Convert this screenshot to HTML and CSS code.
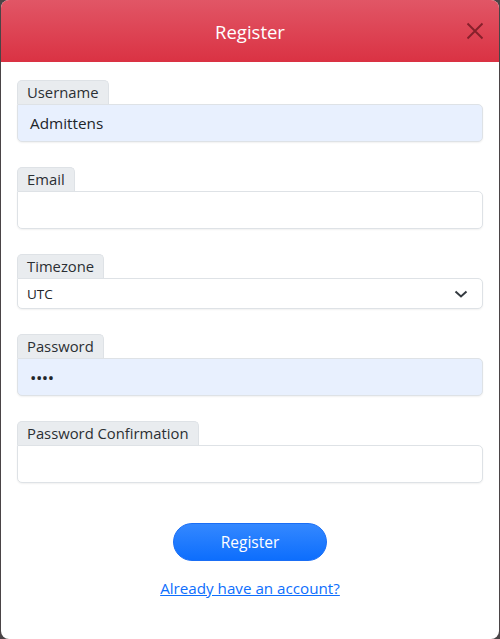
FILE: index.html
```html
<!DOCTYPE html>
<html lang="en">
<head>
<meta charset="utf-8">
<title>Register</title>
<link rel="stylesheet" href="styles.css">
</head>
<body>
<div class="modal">
  <header class="modal-header">
    <span></span>
    <h1 class="modal-title">Register</h1>
    <button class="close" aria-label="Close">
      <svg width="18" height="18" viewBox="0 0 18 18"><path d="M1.5 1.5 L16.5 16.5 M16.5 1.5 L1.5 16.5" stroke="#86202b" stroke-width="1.9" fill="none"/></svg>
    </button>
  </header>
  <form class="modal-body">
    <div class="field">
      <label class="tab">Username</label>
      <div class="input autofill">Admittens</div>
    </div>
    <div class="field">
      <label class="tab">Email</label>
      <div class="input"></div>
    </div>
    <div class="field">
      <label class="tab">Timezone</label>
      <div class="input select"><span>UTC</span>
        <svg width="14" height="10" viewBox="0 0 14 10"><path d="M1.5 2.5 L7 7.5 L12.5 2.5" stroke="#343a40" stroke-width="2" fill="none"/></svg>
      </div>
    </div>
    <div class="field">
      <label class="tab">Password</label>
      <div class="input autofill dots">&#8226;&#8226;&#8226;&#8226;</div>
    </div>
    <div class="field">
      <label class="tab">Password Confirmation</label>
      <div class="input"></div>
    </div>
    <div class="actions">
      <button type="button" class="btn">Register</button>
      <a href="#" class="link">Already have an account?</a>
    </div>
  </form>
</div>
</body>
</html>
```
FILE: styles.css
```css
* { box-sizing: border-box; }
html, body { margin: 0; height: 100%; }
body {
  background: #4a4446;
  font-family: "Open Sans", "Noto Sans", sans-serif;
  color: #212529;
}
.modal {
  margin: 0 1px;
  height: 639px;
  background: #fff;
  border-radius: 8px;
  overflow: hidden;
  display: flex;
  flex-direction: column;
}
.modal-header {
  height: 62px;
  flex: none;
  background: linear-gradient(to bottom, #e15666, #da3243);
  display: grid;
  grid-template-columns: 1fr auto 1fr;
  align-items: center;
}
.modal-title {
  margin: 0;
  font-size: 18.5px;
  font-weight: 400;
  color: #fff;
}
.close {
  justify-self: end;
  margin-right: 15px;
  background: none;
  border: 0;
  padding: 0;
  width: 18px;
  height: 18px;
  display: flex;
}
.modal-body {
  padding: 18px 16px 0;
  display: flex;
  flex-direction: column;
}
.field {
  display: flex;
  flex-direction: column;
  align-items: flex-start;
  margin-bottom: 25px;
}
.tab {
  height: 24px;
  padding: 0 9px;
  background: #e9ecef;
  border: 1px solid #dee2e6;
  border-bottom: 0;
  border-radius: 5px 5px 0 0;
  font-size: 14.8px;
  line-height: 23px;
  color: #2b2f33;
}
.input {
  align-self: stretch;
  height: 38px;
  border: 1px solid #dee2e6;
  border-radius: 0 5px 5px 5px;
  box-shadow: 0 1px 2px rgba(0,0,0,0.06);
  padding: 0 12px;
  font-size: 15.3px;
  display: flex;
  align-items: center;
  background: #fff;
}
.autofill { background: #e8f0fe; }
.dots { font-size: 17px; letter-spacing: -0.5px; padding-left: 12px; }
.select {
  height: 31px;
  padding: 0 14px 0 9px;
  font-size: 13.5px;
  justify-content: space-between;
}
.actions {
  display: flex;
  flex-direction: column;
  align-items: center;
  margin-top: 15px;
}
.btn {
  width: 154px;
  height: 38px;
  border: 1px solid #1a6ef5;
  border-radius: 19px;
  background: linear-gradient(to bottom, #3488ff, #0d6efd);
  color: #fff;
  font-family: inherit;
  font-size: 15.5px;
}
.link {
  margin-top: 15px;
  font-size: 15.2px;
  line-height: 24px;
  color: #0d6efd;
  text-decoration: underline;
}
```
